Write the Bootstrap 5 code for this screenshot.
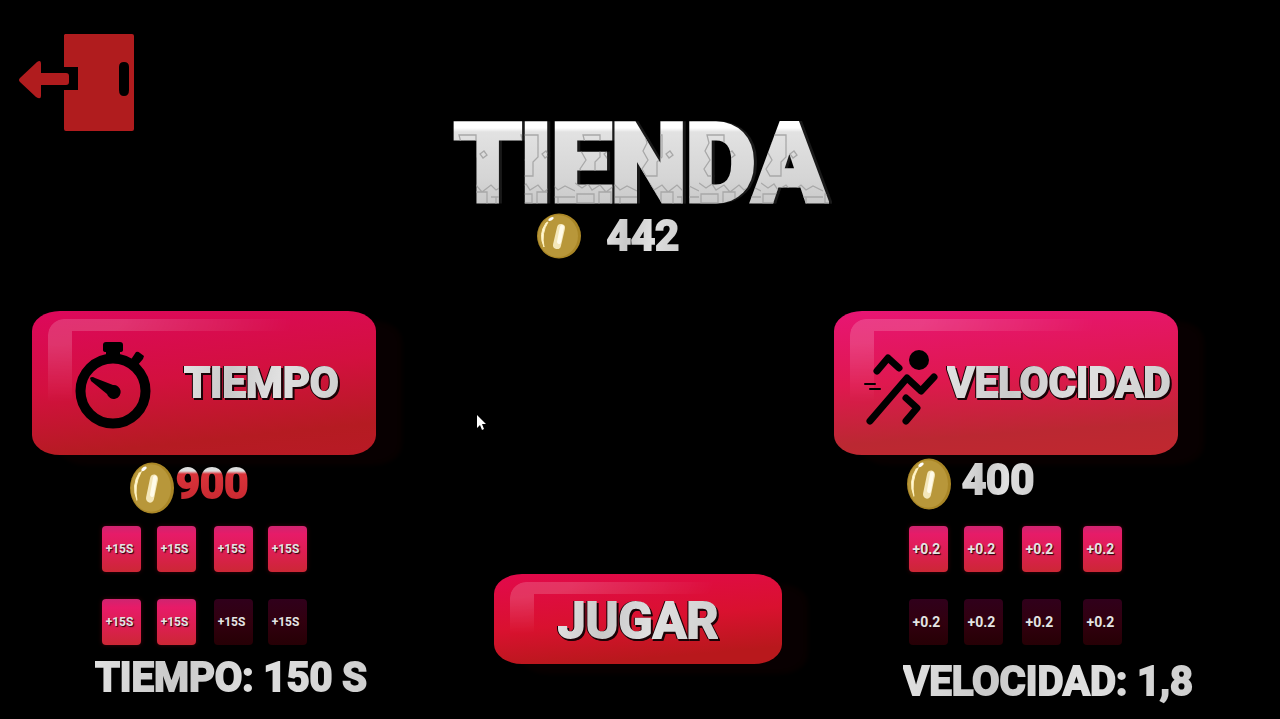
<!DOCTYPE html>
<html lang="es">
<head>
<meta charset="utf-8">
<meta name="viewport" content="width=device-width, initial-scale=1">
<title>Tienda</title>
<link href="https://cdn.jsdelivr.net/npm/bootstrap@5.3.0/dist/css/bootstrap.min.css" rel="stylesheet">
<style>
  body { background: #000; color: #dcdcdc; font-family: Roboto, "Liberation Sans", sans-serif; font-weight: 700; }
  .shop-top { display: grid; grid-template-columns: 1fr auto 1fr; padding: 33px 19px 0 19px; }
  .shop-main { display: grid; grid-template-columns: minmax(0, 344fr) minmax(0, 118fr) minmax(0, 288fr) minmax(0, 52fr) minmax(0, 344fr); padding: 0 102px 0 32px; margin-top: 52px; }
  .slot-time { grid-column: 1; }
  .slot-play { grid-column: 3; padding-top: 263px; }
  .slot-speed { grid-column: 5; }
  .exit-btn svg { width: 116px; height: 99px; display: block; }

  /* carved stone lettering */
  .stone { display: block; width: fit-content; color: transparent; -webkit-text-stroke: 2px transparent; white-space: nowrap;
    background: linear-gradient(100deg, #e2e2e2, #c9c9c9 30%, #e0e0e0 60%, #cecece); -webkit-background-clip: text; background-clip: text; }
  .shop-title { font-size: 106px; line-height: 98px; padding: 0 4px; margin: 82px 0 0; font-weight: 700; -webkit-text-stroke: 7px transparent;
    background: url("data:image/svg+xml,%3Csvg xmlns='http://www.w3.org/2000/svg' width='62' height='98'%3E%3Cg fill='none' stroke='%23a8a8a8' stroke-width='1.3'%3E%3Cpath d='M8 20h17v22l-5 5v14H9l-4-7 6-9-5-9 4-8zM29 39l4-3 3 4-4 3z'/%3E%3Cpath d='M0 68l7 5 6-4 4 6 8-5 6 7 9-7 5 5 7-4 10 5M2 79h17v9H2zM24 77h12v14H24zM40 82h22M45 82v10M0 90h62'/%3E%3C/g%3E%3C/svg%3E") 0 0 / 62px 98px, linear-gradient(#fff 13px, #e2e2e2 17px, #d5d5d5 65%, #c5c5c5);
    -webkit-background-clip: text; background-clip: text; filter: drop-shadow(3px 0 0 #191919); }
  .wallet { gap: 26px; padding-right: 64px; }
  .num { font-size: 42px; line-height: 44px; }
  .num-debt { background: linear-gradient(#ddd 9px, #d9333a 12px, #c6272f); -webkit-background-clip: text; background-clip: text; }
  .cap-text { font-size: 40px; line-height: 50px; margin-bottom: 0; }
  .on-btn { position: relative; filter: drop-shadow(2px 2px 0 #1a0206) drop-shadow(-1px 0 0 #1a0206); }
  .upgrade .cap-text { font-size: 42px; }
  .play-text { font-size: 50px; line-height: 60px; margin: 4px auto 0; }

  .coin { width: 44px; height: 46px; flex: none; }
  .coin-tall { height: 52px; }
  .price { position: relative; z-index: 1; }
  .price-time { margin: 7px 0 12px 98px; gap: 2px; }
  .price-speed { margin: 3px 0 16px 73px; gap: 11px; }
  .price .stone { margin-bottom: 8px; }
  .total-time { margin: 8px 0 0 63px; }
  .total-speed { margin: 12px 0 0 69px; }

  .glossy { position: relative; border: 0; width: 100%; padding: 0; color: #000; border-radius: 28px / 20px; font-weight: 700;
    background: linear-gradient(174deg, #dd085c, #d3103f 45%, #b51b22 82%, #b81a25); box-shadow: 26px 10px 4px #080001; }
  .glossy::before { content: ""; position: absolute; left: 16px; top: 8px; width: 72%; height: 58%; border-top: 12px solid #ffffff2b; border-left: 24px solid #ffffff2b;
    border-radius: 16px 0 0 0; -webkit-mask: radial-gradient(farthest-side at 0 0, #000 30%, transparent); mask: radial-gradient(farthest-side at 0 0, #000 30%, transparent); }
  .upgrade { height: 144px; }
  .upgrade-speed { background: linear-gradient(176deg, #e81574, #df184f 45%, #bb2832 80%, #c0282f); }
  .play { height: 90px; background: linear-gradient(175deg, #e2094c, #d9112f 50%, #b8181c 85%); }
  .icon-time, .icon-speed { position: relative; flex: none; }
  .icon-time { width: 76px; height: 88px; margin: 4px 33px 0 43px; }
  .icon-speed { width: 76px; height: 80px; margin: 10px 7px 0 30px; }

  .levels { display: grid; padding: 0; list-style: none; row-gap: 27px; margin: 0; }
  .levels-time { grid-template-columns: 55px 57px 54px 40px; margin-left: 70px; font-size: 12px; }
  .levels-speed { grid-template-columns: 55px 58px 61px 40px; margin-left: 75px; font-size: 14px; }
  .level { width: 39px; height: 46px; padding-right: 4px; border-radius: 4px; display: flex; align-items: center; justify-content: center;
    color: #e4e4e4; text-shadow: 1px 1px 1px #210009; background: linear-gradient(#cf2470, #e71b68 18%, #dc1f50 60%, #cc2735); box-shadow: 0 0 4px #41000d; }
  .level-off { background: linear-gradient(#30001b, #31000f 50%, #260005); box-shadow: none; }
  .pointer { position: absolute; left: 476px; top: 415px; width: 10px; height: 16px; pointer-events: none; }
</style>
<script src="https://cdn.jsdelivr.net/npm/bootstrap@5.3.0/dist/js/bootstrap.bundle.min.js"></script>
</head>
<body class="overflow-x-hidden">
<svg class="d-none" aria-hidden="true">
  <symbol id="coin" viewBox="0 0 44 46" preserveAspectRatio="none">
    <ellipse cx="22" cy="23" rx="22" ry="22.5" fill="#a98626"/>
    <ellipse cx="21" cy="23" rx="20" ry="21" fill="#b8973a"/>
    <path d="M9 10Q1 21 7 34Q4 20 11 9Z" fill="#fff9da" stroke="#fff2bd" stroke-width="1"/>
    <ellipse cx="14" cy="6" rx="3" ry="1.5" fill="#fff" transform="rotate(-30 14 6)"/>
    <path d="M24 15L20 32" stroke="#f4e7ba" stroke-width="8" stroke-linecap="round"/>
    <path d="M25 14L22 29" stroke="#fffbea" stroke-width="4" stroke-linecap="round"/>
  </symbol>
</svg>

<header class="shop-top">
  <div>
    <button class="exit-btn btn p-0 border-0" aria-label="Salir">
      <svg viewBox="0 0 116 99"><path fill="#b01c1e" fill-rule="evenodd" d="M46 1h67q2 0 2 2v93q0 2-2 2H47q-2 0-2-2V57h14V34H45V2zM105 29q-5 0-5 5v23q0 6 5 6t5-6V34q0-5-5-5z"/><path fill="#b01c1e" d="M1 45L18 29q4-3 4 2v9h25q3 0 3 3v6q0 3-3 3H22v11q0 4-5 1L1 49q-2-2 0-4z"/></svg>
    </button>
  </div>
  <div>
    <h1 class="stone shop-title">TIENDA</h1>
    <div class="wallet d-flex justify-content-center align-items-center">
      <svg class="coin" aria-hidden="true"><use href="#coin"/></svg>
      <span class="stone num">442</span>
    </div>
  </div>
</header>

<main class="shop-main">
  <section class="slot-time">
    <button class="glossy upgrade d-flex align-items-center">
      <svg class="icon-time" viewBox="0 0 76 88" aria-hidden="true"><circle cx="38" cy="50" r="32.5" fill="none" stroke="#000" stroke-width="10"/><path d="M31 1h14q3 0 3 3v5q0 2-3 2v6H31v-6q-3 0-3-2V4q0-3 3-3zM55 20l6-9q2-1 4 1l4 3-1 3-6 7zM15 37q2-2 5 0l18 7a7 7 0 1 1-6 9L16 40z"/></svg>
      <span class="stone cap-text on-btn">TIEMPO</span>
    </button>
    <div class="price price-time d-flex align-items-center">
      <svg class="coin coin-tall" aria-hidden="true"><use href="#coin"/></svg>
      <span class="stone num num-debt">900</span>
    </div>
    <ul class="levels levels-time">
      <li class="level">+15S</li><li class="level">+15S</li><li class="level">+15S</li><li class="level">+15S</li>
      <li class="level">+15S</li><li class="level">+15S</li><li class="level level-off">+15S</li><li class="level level-off">+15S</li>
    </ul>
    <p class="stone cap-text total-time">TIEMPO: 150 S</p>
  </section>

  <section class="slot-play">
    <button class="glossy play d-flex align-items-center"><span class="stone play-text on-btn">JUGAR</span></button>
  </section>

  <section class="slot-speed">
    <button class="glossy upgrade upgrade-speed d-flex align-items-center">
      <svg class="icon-speed" viewBox="0 0 76 80" aria-hidden="true"><circle cx="55" cy="12" r="10"/><g fill="none" stroke="#000" stroke-linecap="round" stroke-linejoin="round" stroke-width="7"><path d="M13 23L24 10 35 20M6 73L43 30 57 43 70 29M42 50L53 60 42 73"/><path stroke-width="2" d="M1 36h10M6 41h10"/></g></svg>
      <span class="stone cap-text on-btn">VELOCIDAD</span>
    </button>
    <div class="price price-speed d-flex align-items-center">
      <svg class="coin coin-tall" aria-hidden="true"><use href="#coin"/></svg>
      <span class="stone num">400</span>
    </div>
    <ul class="levels levels-speed">
      <li class="level">+0.2</li><li class="level">+0.2</li><li class="level">+0.2</li><li class="level">+0.2</li>
      <li class="level level-off">+0.2</li><li class="level level-off">+0.2</li><li class="level level-off">+0.2</li><li class="level level-off">+0.2</li>
    </ul>
    <p class="stone cap-text total-speed">VELOCIDAD: 1,8</p>
  </section>
</main>
<svg class="pointer" viewBox="0 0 10 16" aria-hidden="true"><path d="M1 0v13l3-3 2 5 2-1-2-5h4z" fill="#fff"/></svg>
</body>
</html>
